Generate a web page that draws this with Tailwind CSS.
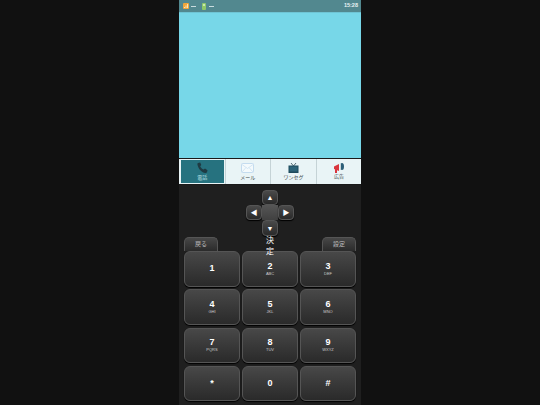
<!DOCTYPE html>
<html lang="ja">
<head>
    <meta charset="UTF-8">
    <meta name="viewport" content="width=device-width, initial-scale=1.0">
    <title>Phone</title>
    <script src="https://cdn.jsdelivr.net/npm/@tailwindcss/browser@4"></script>
</head>
<body class="h-[405px] overflow-hidden bg-[#111111] font-['Liberation_Sans','Noto_Sans_CJK_JP',sans-serif]">
    <div class="mx-auto flex h-[405px] w-[182px] flex-col bg-[#1f1f1f]">
        <!-- Status bar -->
        <div class="flex h-[12px] items-center justify-between bg-[#52888f] pl-[4px] pr-[3px]">
            <div class="flex items-center">
                <svg width="6" height="6" viewBox="0 0 6 6"><rect width="6" height="6" rx="1" fill="#f0a53a"/><path d="M1 5h1V4H1zM2.500 5h1V2.500h-1zM4 5h1V1H4z" fill="#fde3b0"/></svg>
                <span class="ml-[2px] h-[1px] w-[5px] bg-[#c8dcdf]"></span>
                <svg class="ml-[6px]" width="4" height="7" viewBox="0 0 4 7"><rect width="4" height="7" rx="1" fill="#8fc86a"/><rect x="1" y="1" width="2" height="2" fill="#c9e8ae"/></svg>
                <span class="ml-[3px] h-[1px] w-[5px] bg-[#c8dcdf]"></span>
            </div>
            <span class="text-[5.5px] font-bold leading-none text-[#e8f2f3]">15:28</span>
        </div>

        <!-- Screen -->
        <div class="h-[146px] border-t border-[#6fc4d4] bg-[#77d7e8]"></div>

        <!-- Tabs -->
        <div class="grid h-[27px] grid-cols-[44.5px_45.500px_46px_1fr] border-y border-[#1a1a1a] bg-[#e9f4f6] pl-[1px]">
            <div class="flex flex-col items-center border border-[#e9f4f6] bg-[#26727f] pt-[2px]">
                <svg width="13" height="12" viewBox="0 0 13 12"><path d="M2 1 4.200.6 5.300 3 4.200 4.200C4.800 5.600 6 6.700 7.600 7.600L9 6.600l2.500 1.600-.5 2c-.2.6-.9.9-1.600.8C5.200 10.300 2 6.500 1.400 2.200 1.300 1.600 1.500 1.200 2 1Z" fill="#1f3b43"/></svg>
                <span class="mt-[1px] text-[5px] leading-none text-[#bfe0e6]">電話</span>
            </div>
            <div class="flex flex-col items-center border-l border-[#c5d3d6] pt-[4px]">
                <svg width="13" height="10" viewBox="0 0 13 10"><rect x=".5" y=".5" width="12" height="9" rx="1" fill="#f4fafc" stroke="#c4dcef"/><path d="m1 1.500 5.500 4 5.500-4M1 9l4-4.500M12 9 8 4.500" fill="none" stroke="#c4dcef" stroke-width=".7"/></svg>
                <span class="mt-[2px] text-[5px] leading-none text-[#3d4a4d]">メール</span>
            </div>
            <div class="flex flex-col items-center border-l border-[#c5d3d6] pt-[4px]">
                <svg width="11" height="11" viewBox="0 0 11 11"><path d="M3 0 5.500 3 8 0" fill="none" stroke="#2f4a55" stroke-width=".8"/><rect x=".5" y="2.500" width="10" height="7.500" fill="#1d4a5c"/><rect x="1.500" y="3.500" width="8" height="5" fill="#2c6378"/></svg>
                <span class="mt-[1px] text-[5px] leading-none text-[#3d4a4d]">ワンセグ</span>
            </div>
            <div class="flex flex-col items-center border-l border-[#c5d3d6] pt-[3px]">
                <svg width="12" height="12" viewBox="0 0 12 12"><path d="M1 4.500 6 2v7L1 7Z" fill="#d9363e"/><rect x="2" y="7" width="2" height="4" fill="#d9363e"/><ellipse cx="9" cy="4.500" rx="2" ry="3.500" fill="#2c5f78"/><rect x="7" y="2" width="1" height="6" fill="#c9d6da"/></svg>
                <span class="text-[5px] leading-none text-[#3d4a4d]">広告</span>
            </div>
        </div>

        <!-- Keypad area -->
        <div class="relative flex flex-1 flex-col px-[5px] pt-[5px]">
            <div class="mx-auto grid grid-cols-[16px_16px_16px] grid-rows-[15px_15px_16px] self-center">
                <div></div>
                <div class="flex items-center justify-center rounded-[4px] border border-[#555] bg-gradient-to-b from-[#4a4a4a] to-[#2a2a2a] text-[7px] leading-none text-white shadow-[0_1px_1px_#000]">▲</div>
                <div></div>
                <div class="flex items-center justify-center rounded-[4px] border border-[#555] bg-gradient-to-b from-[#4a4a4a] to-[#2a2a2a] text-[7px] leading-none text-white shadow-[0_1px_1px_#000]">◀</div>
                <div class="bg-gradient-to-b from-[#565656] to-[#404040]"></div>
                <div class="flex items-center justify-center rounded-[4px] border border-[#555] bg-gradient-to-b from-[#4a4a4a] to-[#2a2a2a] text-[7px] leading-none text-white shadow-[0_1px_1px_#000]">▶</div>
                <div></div>
                <div class="flex items-center justify-center rounded-[4px] border border-[#555] bg-gradient-to-b from-[#4a4a4a] to-[#2a2a2a] text-[7px] leading-none text-white shadow-[0_1px_1px_#000]">▼</div>
                <div></div>
            </div>

            <div class="mt-[1px] flex h-[14px] justify-between">
                <div class="flex w-[34px] items-center justify-center rounded-t-[5px] border border-b-0 border-[#555] bg-gradient-to-b from-[#474747] to-[#2b2b2b] text-[6px] text-[#bbb]">戻る</div>
                <div class="flex w-[34px] items-center justify-center rounded-t-[5px] border border-b-0 border-[#555] bg-gradient-to-b from-[#474747] to-[#2b2b2b] text-[6px] text-[#bbb]">設定</div>
            </div>

            <div class="grid grid-cols-3 grid-rows-[35.500px_35.500px_35.500px_35.500px] gap-x-[2px] gap-y-[2.8px]">
                <div class="flex flex-col items-center justify-center rounded-[6px] border border-[#555] bg-gradient-to-b from-[#484848] to-[#2a2a2a] shadow-[0_1px_1px_#000]"><span class="text-[9px] font-bold leading-none text-white">1</span></div>
                <div class="flex flex-col items-center justify-center rounded-[6px] border border-[#555] bg-gradient-to-b from-[#484848] to-[#2a2a2a] shadow-[0_1px_1px_#000]"><span class="text-[9px] font-bold leading-none text-white">2</span><span class="text-[4px] leading-[5px] text-[#ccc]">ABC</span></div>
                <div class="flex flex-col items-center justify-center rounded-[6px] border border-[#555] bg-gradient-to-b from-[#484848] to-[#2a2a2a] shadow-[0_1px_1px_#000]"><span class="text-[9px] font-bold leading-none text-white">3</span><span class="text-[4px] leading-[5px] text-[#ccc]">DEF</span></div>
                <div class="flex flex-col items-center justify-center rounded-[6px] border border-[#555] bg-gradient-to-b from-[#484848] to-[#2a2a2a] shadow-[0_1px_1px_#000]"><span class="text-[9px] font-bold leading-none text-white">4</span><span class="text-[4px] leading-[5px] text-[#ccc]">GHI</span></div>
                <div class="flex flex-col items-center justify-center rounded-[6px] border border-[#555] bg-gradient-to-b from-[#484848] to-[#2a2a2a] shadow-[0_1px_1px_#000]"><span class="text-[9px] font-bold leading-none text-white">5</span><span class="text-[4px] leading-[5px] text-[#ccc]">JKL</span></div>
                <div class="flex flex-col items-center justify-center rounded-[6px] border border-[#555] bg-gradient-to-b from-[#484848] to-[#2a2a2a] shadow-[0_1px_1px_#000]"><span class="text-[9px] font-bold leading-none text-white">6</span><span class="text-[4px] leading-[5px] text-[#ccc]">MNO</span></div>
                <div class="flex flex-col items-center justify-center rounded-[6px] border border-[#555] bg-gradient-to-b from-[#484848] to-[#2a2a2a] shadow-[0_1px_1px_#000]"><span class="text-[9px] font-bold leading-none text-white">7</span><span class="text-[4px] leading-[5px] text-[#ccc]">PQRS</span></div>
                <div class="flex flex-col items-center justify-center rounded-[6px] border border-[#555] bg-gradient-to-b from-[#484848] to-[#2a2a2a] shadow-[0_1px_1px_#000]"><span class="text-[9px] font-bold leading-none text-white">8</span><span class="text-[4px] leading-[5px] text-[#ccc]">TUV</span></div>
                <div class="flex flex-col items-center justify-center rounded-[6px] border border-[#555] bg-gradient-to-b from-[#484848] to-[#2a2a2a] shadow-[0_1px_1px_#000]"><span class="text-[9px] font-bold leading-none text-white">9</span><span class="text-[4px] leading-[5px] text-[#ccc]">WXYZ</span></div>
                <div class="flex flex-col items-center justify-center rounded-[6px] border border-[#555] bg-gradient-to-b from-[#484848] to-[#2a2a2a] shadow-[0_1px_1px_#000]"><span class="text-[9px] font-bold leading-none text-white">*</span></div>
                <div class="flex flex-col items-center justify-center rounded-[6px] border border-[#555] bg-gradient-to-b from-[#484848] to-[#2a2a2a] shadow-[0_1px_1px_#000]"><span class="text-[9px] font-bold leading-none text-white">0</span></div>
                <div class="flex flex-col items-center justify-center rounded-[6px] border border-[#555] bg-gradient-to-b from-[#484848] to-[#2a2a2a] shadow-[0_1px_1px_#000]"><span class="text-[9px] font-bold leading-none text-white">#</span></div>
            </div>

            <!-- center label spills over the keys -->
            <div class="absolute left-[85px] top-[50px] w-[12px] text-center text-[8px] leading-[11px] text-white">決定</div>
        </div>
    </div>
</body>
</html>
